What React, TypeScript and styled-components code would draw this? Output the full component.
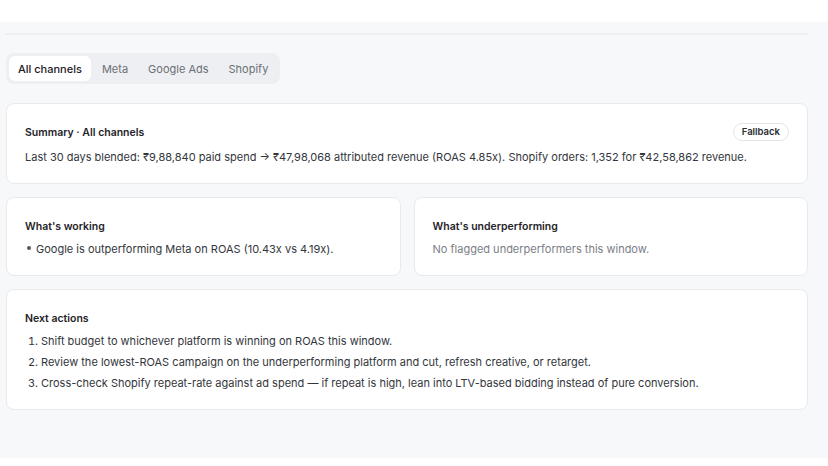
import styled, { createGlobalStyle } from "styled-components";

const GlobalStyle = createGlobalStyle`
  html, body {
    margin: 0;
    padding: 0;
    background: #ffffff;
  }
  body {
    font-family: Inter, "Noto Sans", "Liberation Sans", sans-serif;
    color: #1f2328;
    -webkit-font-smoothing: antialiased;
  }
`;

const TopBar = styled.div`
  height: 22px;
  background: #ffffff;
`;

const Main = styled.main`
  background: #f7f8fa;
  height: 436px;
  padding: 11px 20px 0 5px;
  box-sizing: border-box;
  display: flex;
  flex-direction: column;
`;

const Divider = styled.div`
  height: 2px;
  background: #eff0f3;
  margin-bottom: 18px;
`;

const Content = styled.div`
  padding-left: 1px;
  display: flex;
  flex-direction: column;
  gap: 13px;
`;

const Tabs = styled.div`
  display: flex;
  align-self: flex-start;
  gap: 2px;
  padding: 3px;
  background: #eeeff2;
  border-radius: 8px;
  margin-bottom: 6px;
`;

const Tab = styled.button<{ $active?: boolean }>`
  border: none;
  font-family: inherit;
  font-size: 11px;
  font-weight: ${(props) => (props.$active ? 500 : 400)};
  color: ${(props) => (props.$active ? "#1d2025" : "#6b6f76")};
  background: ${(props) => (props.$active ? "#ffffff" : "transparent")};
  border-radius: 6px;
  height: 25px;
  padding: 0 9px;
  cursor: pointer;
`;

const Card = styled.section`
  background: #ffffff;
  border: 1px solid #e9eaee;
  border-radius: 8px;
  padding: 19px 18px 17px 18px;
  box-sizing: border-box;
`;

const CardHeader = styled.div<{ $tall?: boolean }>`
  display: flex;
  align-items: center;
  justify-content: space-between;
  height: 18px;
  margin-bottom: ${(props) => (props.$tall ? "7px" : "5px")};
`;

const CardTitle = styled.h3`
  margin: 0;
  font-size: 10.5px;
  font-weight: 600;
  color: #1f2328;
`;

const Pill = styled.span`
  font-size: 9.5px;
  font-weight: 600;
  color: #2a2d33;
  border: 1px solid #e4e5e9;
  border-radius: 999px;
  padding: 2px 8px;
  line-height: 12px;
`;

const Text = styled.p<{ $muted?: boolean }>`
  margin: 0;
  font-size: 11px;
  line-height: 18px;
  color: ${(props) => (props.$muted ? "#7a7e86" : "#33363c")};
`;

const Grid = styled.div`
  display: grid;
  grid-template-columns: 1fr 1fr;
  gap: 13px;
`;

const BulletList = styled.ul`
  margin: 0;
  padding: 0 0 0 11px;
  list-style: none;
`;

const Bullet = styled.li`
  position: relative;
  font-size: 11px;
  line-height: 18px;
  color: #33363c;

  &::before {
    content: "";
    position: absolute;
    left: -9px;
    top: 6px;
    width: 4px;
    height: 4px;
    border-radius: 50%;
    background: #55585e;
  }
`;

const NumberList = styled.ol`
  margin: 0;
  padding: 0 0 0 16px;
  display: flex;
  flex-direction: column;
  gap: 3px;
`;

const Step = styled.li`
  font-size: 11px;
  line-height: 18px;
  color: #33363c;
`;

export default function App() {
  return (
    <>
      <GlobalStyle />
      <TopBar />
      <Main>
        <Divider />
        <Content>
          <Tabs>
            <Tab $active>All channels</Tab>
            <Tab>Meta</Tab>
            <Tab>Google Ads</Tab>
            <Tab>Shopify</Tab>
          </Tabs>

          <Card>
            <CardHeader $tall>
              <CardTitle>Summary · All channels</CardTitle>
              <Pill>Fallback</Pill>
            </CardHeader>
            <Text>
              Last 30 days blended: ₹9,88,840 paid spend → ₹47,98,068 attributed
              revenue (ROAS 4.85x). Shopify orders: 1,352 for ₹42,58,862 revenue.
            </Text>
          </Card>

          <Grid>
            <Card>
              <CardHeader>
                <CardTitle>What's working</CardTitle>
              </CardHeader>
              <BulletList>
                <Bullet>Google is outperforming Meta on ROAS (10.43x vs 4.19x).</Bullet>
              </BulletList>
            </Card>
            <Card>
              <CardHeader>
                <CardTitle>What's underperforming</CardTitle>
              </CardHeader>
              <Text $muted>No flagged underperformers this window.</Text>
            </Card>
          </Grid>

          <Card>
            <CardHeader>
              <CardTitle>Next actions</CardTitle>
            </CardHeader>
            <NumberList>
              <Step>Shift budget to whichever platform is winning on ROAS this window.</Step>
              <Step>
                Review the lowest-ROAS campaign on the underperforming platform and cut,
                refresh creative, or retarget.
              </Step>
              <Step>
                Cross-check Shopify repeat-rate against ad spend — if repeat is high, lean
                into LTV-based bidding instead of pure conversion.
              </Step>
            </NumberList>
          </Card>
        </Content>
      </Main>
    </>
  );
}
